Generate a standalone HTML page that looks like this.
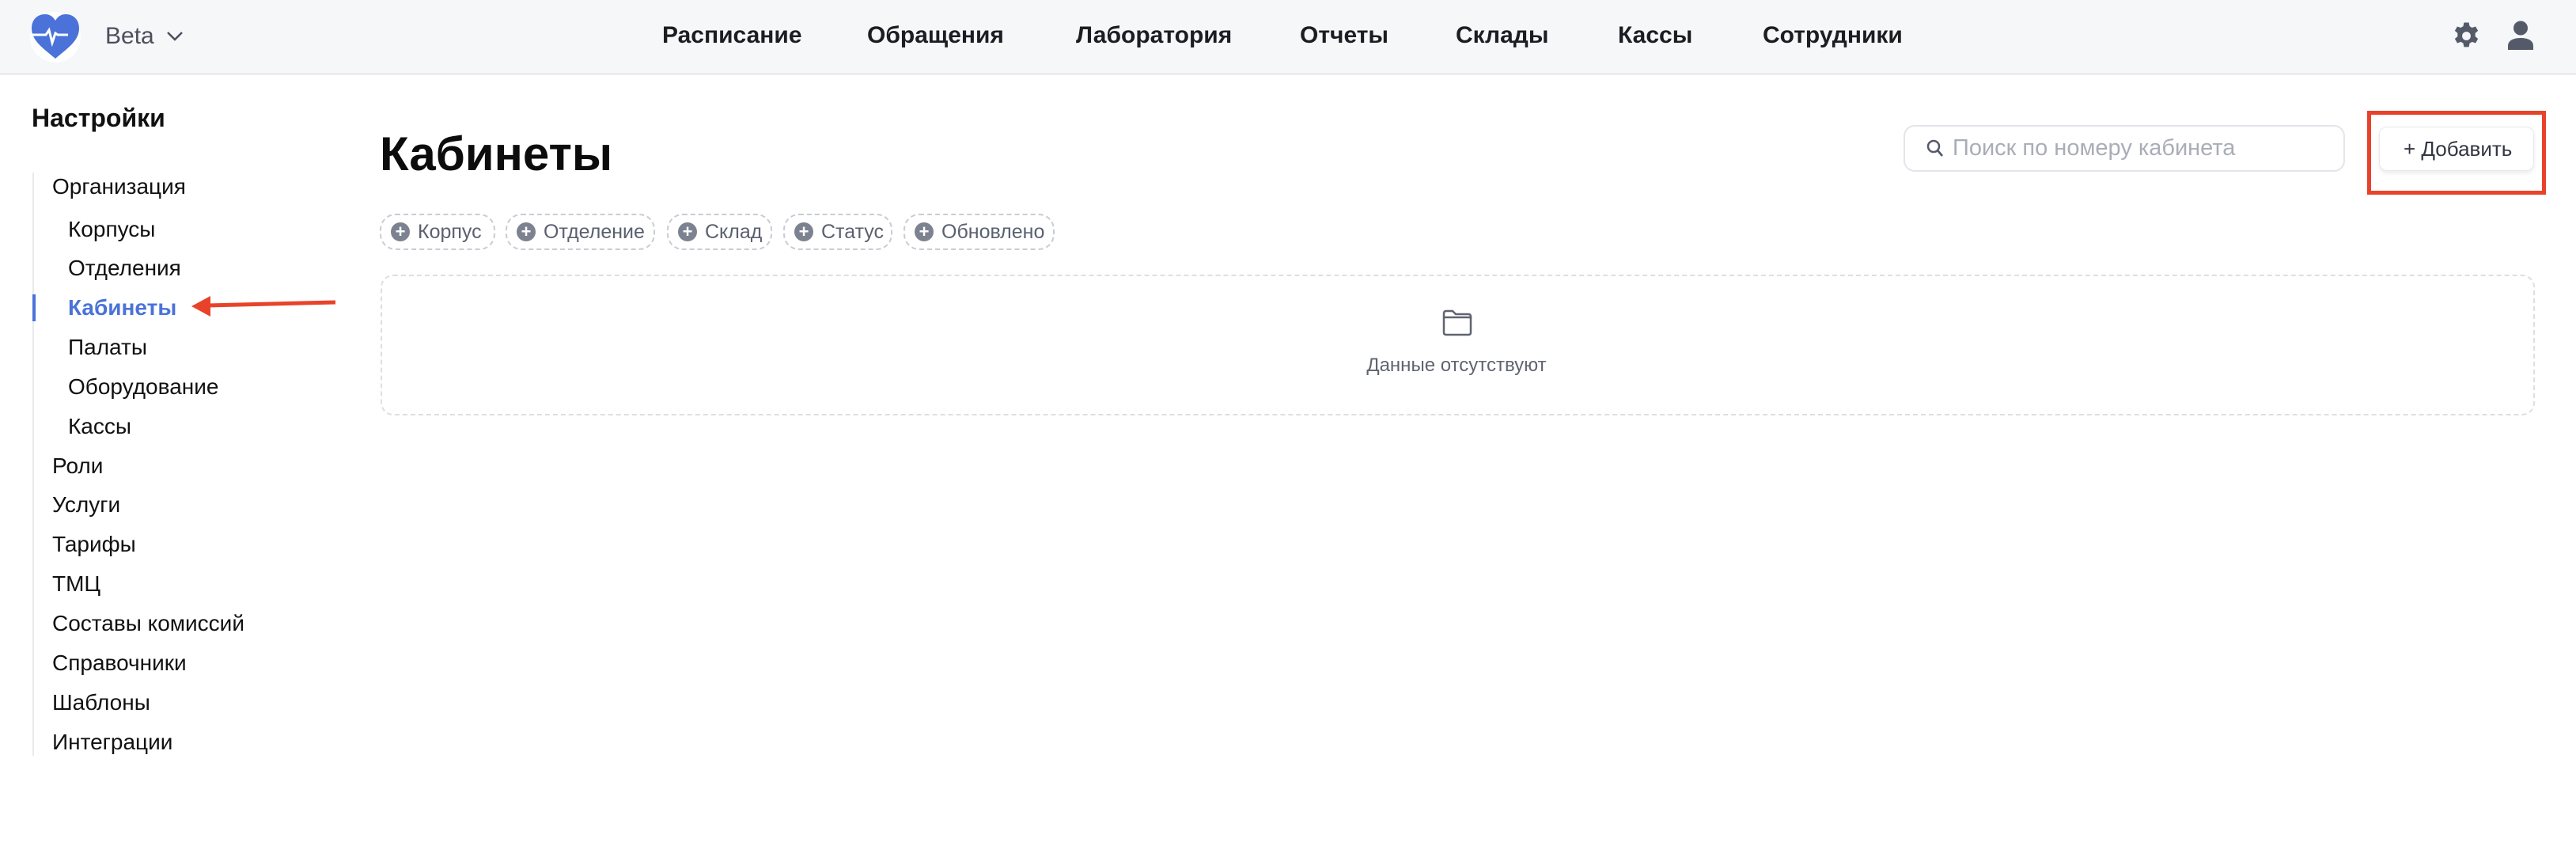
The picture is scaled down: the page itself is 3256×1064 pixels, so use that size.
<!DOCTYPE html>
<html><head><meta charset="utf-8"><style>
*{margin:0;padding:0;box-sizing:border-box}
body{width:3256px;height:1064px;background:#fff;font-family:"Liberation Sans",Arial,sans-serif;position:relative;overflow:hidden;color:#111}
.a{position:absolute;white-space:nowrap}
.hdr{position:absolute;left:0;top:0;width:3256px;height:95px;background:#f6f7f9;border-bottom:3px solid #ececf0}
.nav{font-size:30px;font-weight:600;color:#1b1d22;top:28px}
.si{font-size:28px;color:#111;line-height:34px}
.chip{position:absolute;top:270px;height:46px;border:2px dashed #c9ccd3;border-radius:20px;font-size:25px;color:#5b6070;line-height:42px;padding-left:46px}
.chip:before{content:"+";position:absolute;left:12px;top:9px;width:24px;height:24px;border-radius:50%;background:#7d8290;color:#fff;font-size:22px;line-height:24px;text-align:center;font-weight:700}
</style></head><body>
<div class="hdr"></div>
<svg class="a" style="left:36px;top:14px" width="68" height="66" viewBox="0 0 68 66">
<circle cx="34" cy="33" r="32" fill="#fff"/>
<path d="M34 60 C20 48 4 38 4 22 C4 10 12 4 21 4 C27 4 31 7 34 12 C37 7 41 4 47 4 C56 4 64 10 64 22 C64 38 48 48 34 60Z" fill="#4a72d9"/>
<path d="M4 30 H22 L26 24 L30 40 L34 28 L37 30 H50" fill="none" stroke="#fff" stroke-width="3"/>
</svg>
<div class="a" style="left:133px;top:29px;font-size:30px;color:#4b4f5c">Beta</div>
<svg class="a" style="left:210px;top:38px" width="22" height="16"><path d="M2 3 L11 12 L20 3" fill="none" stroke="#4b4f5c" stroke-width="2.5"/></svg>
<div class="a nav" style="left:837px">Расписание</div>
<div class="a nav" style="left:1096px">Обращения</div>
<div class="a nav" style="left:1360px">Лаборатория</div>
<div class="a nav" style="left:1643px">Отчеты</div>
<div class="a nav" style="left:1840px">Склады</div>
<div class="a nav" style="left:2045px">Кассы</div>
<div class="a nav" style="left:2228px">Сотрудники</div>
<svg class="a" style="left:3099px;top:27px" width="37" height="37" viewBox="0 0 24 24"><path fill="#555a69" fill-rule="evenodd" d="M10 1h4l.6 3 2 1.2 2.9-1 2 3.5-2.3 2a8 8 0 0 1 0 2.6l2.3 2-2 3.5-2.9-1-2 1.2-.6 3h-4l-.6-3-2-1.2-2.9 1-2-3.5 2.3-2a8 8 0 0 1 0-2.6l-2.3-2 2-3.5 2.9 1 2-1.2zM12 8.5a3.5 3.5 0 1 0 0 7 3.5 3.5 0 0 0 0-7z"/></svg>
<svg class="a" style="left:3169px;top:26px" width="34" height="38" viewBox="0 0 34 38"><circle cx="17" cy="9.5" r="9" fill="#555a69"/><path d="M1 37 V32 C1 25 8 22 17 22 C26 22 33 25 33 32 V37Z" fill="#555a69"/></svg>

<div class="a" style="left:40px;top:131px;font-size:32px;font-weight:700">Настройки</div>
<div class="a" style="left:41px;top:218px;width:2px;height:737px;background:#e9eaee"></div>
<div class="a" style="left:41px;top:372px;width:4px;height:34px;background:#4a72d9"></div>
<div class="a si" style="left:66px;top:219px">Организация</div>
<div class="a si" style="left:86px;top:273px">Корпусы</div>
<div class="a si" style="left:86px;top:322px">Отделения</div>
<div class="a si" style="left:86px;top:372px;color:#4a72d9;font-weight:700">Кабинеты</div>
<div class="a si" style="left:86px;top:422px">Палаты</div>
<div class="a si" style="left:86px;top:472px">Оборудование</div>
<div class="a si" style="left:86px;top:522px">Кассы</div>
<div class="a si" style="left:66px;top:572px">Роли</div>
<div class="a si" style="left:66px;top:621px">Услуги</div>
<div class="a si" style="left:66px;top:671px">Тарифы</div>
<div class="a si" style="left:66px;top:721px">ТМЦ</div>
<div class="a si" style="left:66px;top:771px">Составы комиссий</div>
<div class="a si" style="left:66px;top:821px">Справочники</div>
<div class="a si" style="left:66px;top:871px">Шаблоны</div>
<div class="a si" style="left:66px;top:921px">Интеграции</div>
<svg class="a" style="left:238px;top:368px" width="190" height="36"><path d="M24 18 L186 14" stroke="#e8432a" stroke-width="5"/><path d="M4 19 L28 6 L28 32Z" fill="#e8432a"/></svg>

<div class="a" style="left:480px;top:160px;font-size:60px;font-weight:700;color:#0c0c0c">Кабинеты</div>

<div class="a" style="left:2406px;top:158px;width:558px;height:59px;border:2px solid #e3e5ea;border-radius:14px"></div>
<svg class="a" style="left:2434px;top:175px" width="24" height="26" viewBox="0 0 24 26"><circle cx="10" cy="10" r="7" fill="none" stroke="#555a69" stroke-width="2.5"/><path d="M15 15 L21 22" stroke="#555a69" stroke-width="2.8"/></svg>
<div class="a" style="left:2468px;top:171px;font-size:29px;color:#a9adb7">Поиск по номеру кабинета</div>
<div class="a" style="left:2992px;top:140px;width:226px;height:106px;border:5px solid #e8432a"></div>
<div class="a" style="left:3007px;top:160px;width:196px;height:56px;border:1px solid #e8e9ed;border-radius:10px;box-shadow:0 3px 6px rgba(0,0,0,.08);background:#fff"></div>
<div class="a" style="left:3038px;top:173px;font-size:26px;color:#333642">+ Добавить</div>

<div class="chip" style="left:480px;width:146px">Корпус</div>
<div class="chip" style="left:639px;width:189px">Отделение</div>
<div class="chip" style="left:843px;width:133px">Склад</div>
<div class="chip" style="left:990px;width:138px">Статус</div>
<div class="chip" style="left:1142px;width:191px">Обновлено</div>

<div class="a" style="left:481px;top:347px;width:2723px;height:178px;border:2px dashed #dcdfe4;border-radius:16px"></div>
<svg class="a" style="left:1822px;top:391px" width="40" height="34" viewBox="0 0 40 34"><path d="M3 10 V5 C3 3 4 2 6 2 H14 L18 6 H34 C36 6 37 7 37 9 V12" fill="none" stroke="#5f6470" stroke-width="2.5"/><path d="M3 10 H37 V29 C37 31 36 32 34 32 H6 C4 32 3 31 3 29Z" fill="none" stroke="#5f6470" stroke-width="2.5" stroke-linejoin="round"/></svg>
<div class="a" style="left:1726px;top:448px;font-size:24px;color:#5f6470;width:230px;text-align:center">Данные отсутствуют</div>
</body></html>
